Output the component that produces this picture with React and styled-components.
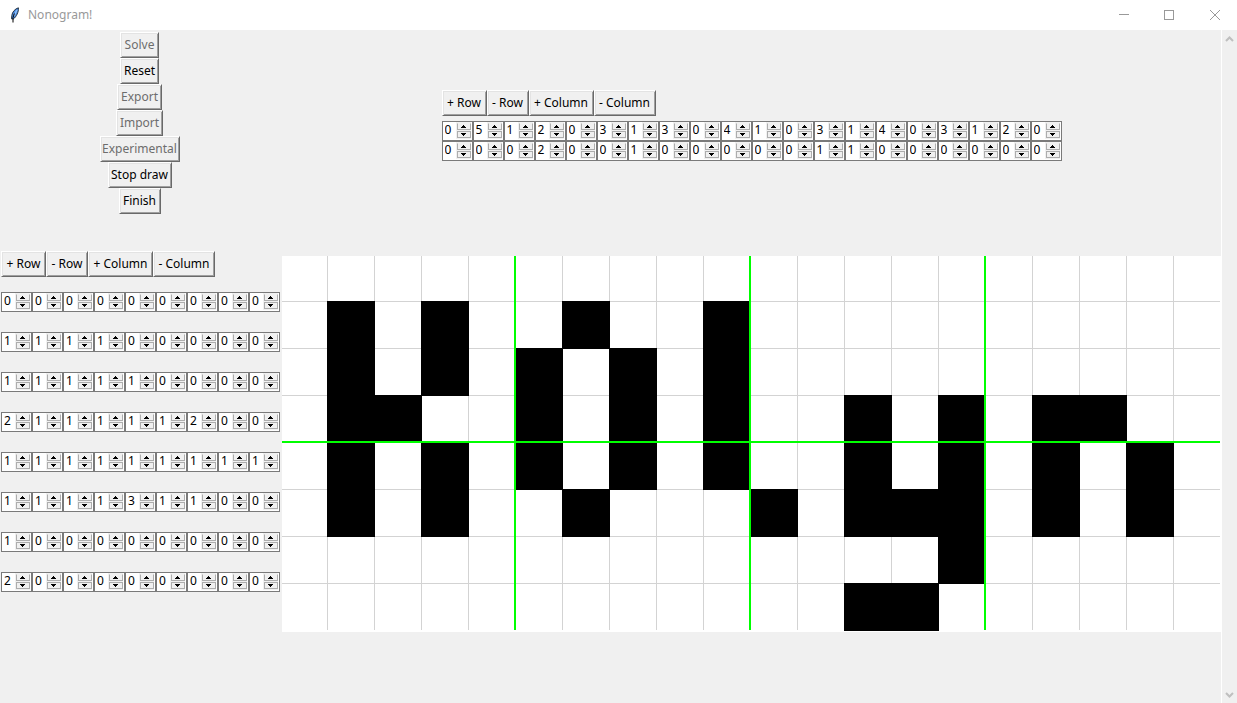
import React, { useState } from "react";
import styled, { createGlobalStyle } from "styled-components";

const GlobalStyle = createGlobalStyle`
  * { box-sizing: border-box; }
  html, body, #root { height: 100%; }
  body {
    margin: 0;
    background: #f0f0f0;
    font-family: "Noto Sans", "Open Sans", sans-serif;
    font-size: 12px;
    line-height: 16px;
    color: #000;
  }
`;

const Window = styled.div`
  display: flex;
  flex-direction: column;
  min-height: 100%;
`;

const TitleBar = styled.header`
  display: flex;
  align-items: center;
  height: 30px;
  padding-left: 7px;
  background: #fff;
  color: #999;
`;

const Title = styled.h1`
  flex: 1;
  margin: 0 0 0 5px;
  font-size: 12px;
  font-weight: 400;
`;

const CaptionButton = styled.button`
  display: grid;
  place-items: center;
  width: 45px;
  height: 30px;
  padding: 0;
  border: 0;
  background: transparent;
`;

const Body = styled.div`
  flex: 1;
  display: flex;
`;

const Workspace = styled.main`
  flex: 1;
  min-width: 0;
  display: grid;
  grid-template-columns: 282px minmax(0, 1fr);
  grid-template-rows: 186px auto;
  row-gap: 34px;
  align-content: start;
`;

const Actions = styled.section`
  display: flex;
  flex-direction: column;
  align-items: center;
  padding-top: 2px;
  padding-right: 3px;
`;

const Button = styled.button`
  width: ${(p) => p.$width}px;
  height: 26px;
  padding: 0;
  border: 1px solid;
  border-color: #fff #696969 #696969 #fff;
  box-shadow: inset 1px 1px #e3e3e3, inset -1px -1px #a0a0a0;
  background: #f0f0f0;
  color: #000;
  font: inherit;
  white-space: nowrap;
  &:disabled { color: #6d6d6d; }
`;

const TopClues = styled.section`
  display: flex;
  flex-direction: column;
  justify-self: center;
  gap: 5px;
  padding-top: 60px;
`;

const SideClues = styled.section`
  display: flex;
  flex-direction: column;
  gap: 15px;
  padding: 1px 0 0 1px;
`;

const Toolbar = styled.div`
  display: flex;
`;

const ClueRows = styled.div`
  display: grid;
  row-gap: ${(p) => p.$gap}px;
`;

const ClueRow = styled.div`
  display: flex;
`;

const SpinFrame = styled.div`
  display: flex;
  align-items: flex-start;
  width: 31px;
  height: 20px;
  border: 1px solid #7a7a7a;
  background: #fff;
`;

const SpinInput = styled.input`
  width: 13px;
  height: 16px;
  padding: 0 0 0 2px;
  border: 0;
  outline: 0;
  background: transparent;
  color: #000;
  font: inherit;
`;

const Arrows = styled.div`
  display: grid;
  grid-template-rows: 7px 7px;
  row-gap: 1px;
  width: 15px;
  padding: 1px 0 1px 1px;
  background: #f0f0f0;
`;

const ArrowButton = styled.button`
  display: grid;
  place-items: center;
  padding: 0;
  border: 1px solid #adadad;
  border-top-color: ${(p) => (p.$up ? "#f0f0f0" : "#adadad")};
  background: #f0f0f0;
`;

const Board = styled.svg`
  display: block;
  width: 100%;
  margin-top: 6px;
  background: #fff;
`;

const ScrollBar = styled.aside`
  display: flex;
  flex-direction: column;
  justify-content: space-between;
  width: 16px;
  border-left: 1px solid #fff;
`;

const ScrollButton = styled.button`
  display: grid;
  place-items: center;
  height: 17px;
  padding: 0;
  border: 0;
  background: #f0f0f0;
`;

const actions = [
  ["Solve", 39, true],
  ["Reset", 39, false],
  ["Export", 45, true],
  ["Import", 47, true],
  ["Experimental", 80, true],
  ["Stop draw", 64, false],
  ["Finish", 42, false],
];

const sizeTools = [["+ Row", 45], ["- Row", 42], ["+ Column", 65], ["- Column", 62]];

const columnClues = ["05120313041031403120", "00020010000011000000"];

const rowClues = [
  "000000000",
  "111100000",
  "111110000",
  "211111200",
  "111111111",
  "111131100",
  "100000000",
  "200000000",
];

const filled = [
  [],
  [1, 3, 6, 9],
  [1, 3, 5, 7, 9],
  [1, 2, 5, 7, 9, 12, 14, 16, 17],
  [1, 3, 5, 7, 9, 12, 14, 16, 18],
  [1, 3, 6, 10, 12, 13, 14, 16, 18],
  [14],
  [12, 13],
];

const CELL = 47;
const at = (n) => n * CELL - 2;

function Spinner({ initial, label }) {
  const [value, setValue] = useState(initial);
  const step = (d) => setValue((v) => String(Math.max(0, Number(v) + d)));
  return (
    <SpinFrame>
      <SpinInput
        inputMode="numeric"
        aria-label={label}
        value={value}
        onChange={(e) => setValue(e.target.value)}
      />
      <Arrows>
        <ArrowButton $up aria-label={`Increase ${label}`} onClick={() => step(1)}>
          <svg width="6" height="3" shapeRendering="crispEdges" display="block">
            <path d="M2 0h1v1h1v1h1v1H0V2h1V1h1z" />
          </svg>
        </ArrowButton>
        <ArrowButton aria-label={`Decrease ${label}`} onClick={() => step(-1)}>
          <svg width="6" height="3" shapeRendering="crispEdges" display="block">
            <path d="M0 0h5v1H4v1H3v1H2V2H1V1H0z" />
          </svg>
        </ArrowButton>
      </Arrows>
    </SpinFrame>
  );
}

function Clues({ rows, name, gap }) {
  return (
    <ClueRows $gap={gap}>
      {rows.map((row, r) => (
        <ClueRow key={r}>
          {[...row].map((n, c) => (
            <Spinner key={c} initial={n} label={`${name} ${r + 1}, ${c + 1}`} />
          ))}
        </ClueRow>
      ))}
    </ClueRows>
  );
}

function SizeTools() {
  return (
    <Toolbar>
      {sizeTools.map(([text, width]) => (
        <Button key={text} $width={width}>{text}</Button>
      ))}
    </Toolbar>
  );
}

function Nonogram() {
  const columns = Array.from({ length: 19 }, (_, i) => i + 1);
  const rows = Array.from({ length: 7 }, (_, i) => i + 1);
  return (
    <Board viewBox="0 0 939 376" shapeRendering="crispEdges" role="img" aria-label="Nonogram board">
      {columns.map((c) => <rect key={c} x={at(c)} y="0" width="1" height="374" fill="#d3d3d3" />)}
      {rows.map((r) => <rect key={r} x="0" y={at(r)} width="938" height="1" fill="#d3d3d3" />)}
      {filled.map((cells, r) =>
        cells.map((c) => (
          <rect key={`${r}-${c}`} x={at(c)} y={at(r)} width="48" height="48" />
        ))
      )}
      {[5, 10, 15].map((c) => (
        <rect key={c} x={at(c) - 1} y="0" width="2" height="374" fill="#0f0" />
      ))}
      <rect x="0" y={at(4) - 1} width="938" height="2" fill="#0f0" />
    </Board>
  );
}

export default function App() {
  return (
    <Window>
      <GlobalStyle />
      <TitleBar>
        <svg width="16" height="16" viewBox="0 0 16 16" aria-hidden="true">
          <path d="M11.4 0.8C8 1.8 5.2 5 4.8 8.5L4.5 11.8 6.4 12C9.4 9.6 11.8 5 11.4 0.8z" fill="#4a8be0" stroke="#1c2733" strokeWidth="0.9" />
          <path d="M10 3L7 9" stroke="#8fc0fa" strokeWidth="1.4" />
          <path d="M7.4 6.5L6 10.5 6 15.5" fill="none" stroke="#000" strokeWidth="1" />
        </svg>
        <Title>Nonogram!</Title>
        <CaptionButton aria-label="Minimize">
          <svg width="11" height="10" shapeRendering="crispEdges"><rect y="4" width="10" height="1" fill="#999" /></svg>
        </CaptionButton>
        <CaptionButton aria-label="Maximize">
          <svg width="11" height="10"><rect x=".5" y=".5" width="9" height="9" fill="none" stroke="#999" /></svg>
        </CaptionButton>
        <CaptionButton aria-label="Close">
          <svg width="11" height="10"><path d="M1 0L11 10M11 0L1 10" stroke="#999" /></svg>
        </CaptionButton>
      </TitleBar>
      <Body>
        <Workspace>
          <Actions>
            {actions.map(([text, width, disabled]) => (
              <Button key={text} $width={width} disabled={disabled}>{text}</Button>
            ))}
          </Actions>
          <TopClues>
            <SizeTools />
            <Clues rows={columnClues} name="Column clue" gap={0} />
          </TopClues>
          <SideClues>
            <SizeTools />
            <Clues rows={rowClues} name="Row clue" gap={20} />
          </SideClues>
          <Nonogram />
        </Workspace>
        <ScrollBar>
          <ScrollButton aria-label="Scroll up">
            <svg width="9" height="6"><path d="M1 5L4.5 1.5 8 5" fill="none" stroke="#bfbfbf" strokeWidth="2" /></svg>
          </ScrollButton>
          <ScrollButton aria-label="Scroll down">
            <svg width="9" height="6"><path d="M1 1L4.5 4.5 8 1" fill="none" stroke="#bfbfbf" strokeWidth="2" /></svg>
          </ScrollButton>
        </ScrollBar>
      </Body>
    </Window>
  );
}
